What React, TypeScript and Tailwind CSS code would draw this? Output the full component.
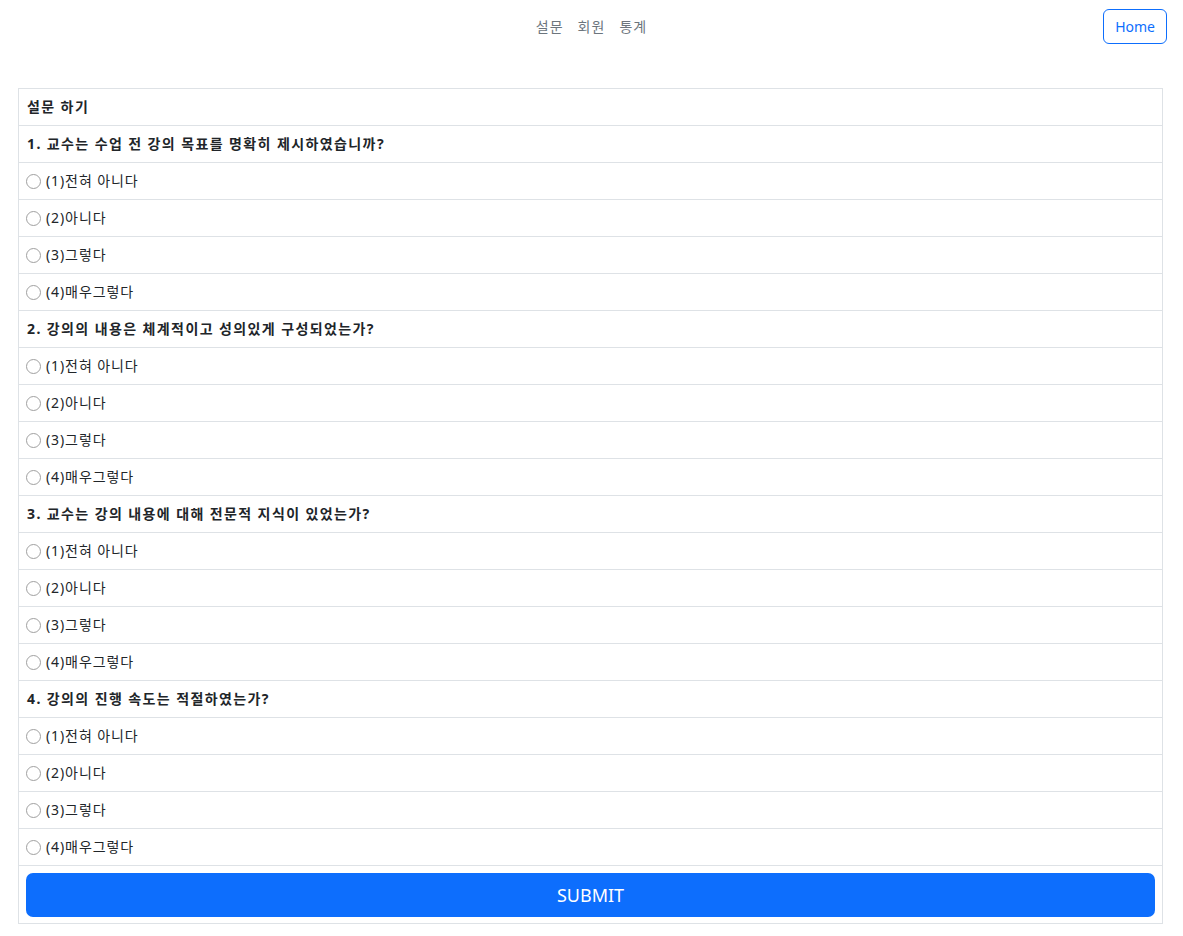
import React from "react";

const questions = [
  "1. 교수는 수업 전 강의 목표를 명확히 제시하였습니까?",
  "2. 강의의 내용은 체계적이고 성의있게 구성되었는가?",
  "3. 교수는 강의 내용에 대해 전문적 지식이 있었는가?",
  "4. 강의의 진행 속도는 적절하였는가?",
];

const options = ["(1)전혀 아니다", "(2)아니다", "(3)그렇다", "(4)매우그렇다"];

const font = { fontFamily: '"Segoe UI", "Noto Sans", "Noto Sans CJK KR", sans-serif' };

export default function App() {
  return (
    <div className="min-h-[936px] bg-white text-[#212529]" style={font}>
      {/* nav */}
      <nav className="relative flex h-[53px] items-center justify-center">
        <div className="flex gap-[14px] text-[14px] tracking-[1px] text-[#6c757d]">
          <a href="#">설문</a>
          <a href="#">회원</a>
          <a href="#">통계</a>
        </div>
        <button className="absolute right-[16px] top-[9px] h-[35px] rounded-[6px] border border-[#0d6efd] px-[11px] text-[14px] text-[#0d6efd]">
          Home
        </button>
      </nav>

      <div className="ml-[18px] mr-[20px] mt-[35px] border border-[#dee2e6]">
        <div className="border-b border-[#dee2e6] px-2 py-2 text-[14px] font-bold leading-5 tracking-[1.4px]">설문 하기</div>
        {questions.map((q, qi) => (
          <div key={qi}>
            <div className="border-b border-[#dee2e6] px-2 py-2 text-[14px] font-bold leading-5 tracking-[1.4px]">{q}</div>
            {options.map((o, oi) => (
              <label
                key={oi}
                className="flex items-center gap-[5px] border-b border-[#dee2e6] px-2 py-2 text-[14px] leading-5 tracking-[0.9px]"
              >
                <span className="-ml-px h-[15px] w-[15px] rounded-full border border-[#a0a0a0] bg-white" />
                <span>{o}</span>
              </label>
            ))}
          </div>
        ))}
        <div className="px-[7px] pb-[6px] pt-[7px]">
          <button className="h-[44px] w-full rounded-[7px] bg-[#0d6efd] text-[18px] text-white">SUBMIT</button>
        </div>
      </div>
    </div>
  );
}
